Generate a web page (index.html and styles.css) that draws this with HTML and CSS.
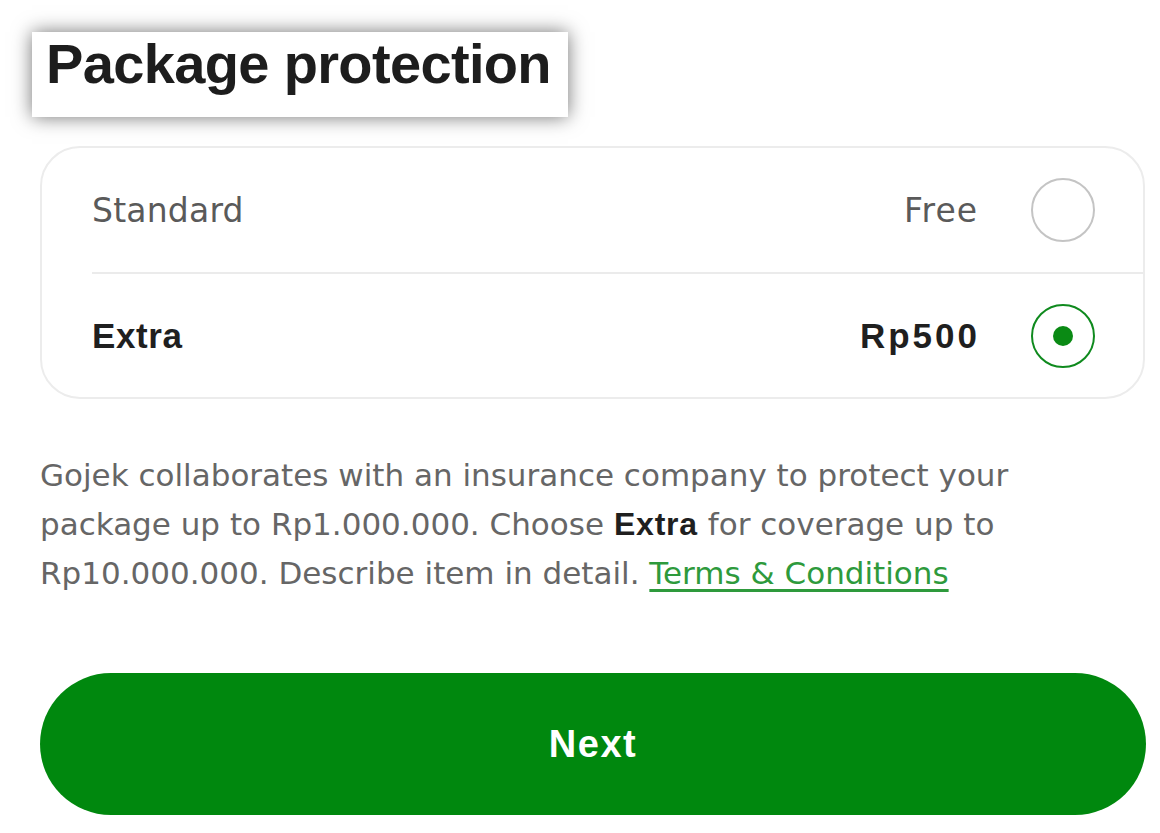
FILE: index.html
```html
<!DOCTYPE html>
<html>
<head>
<meta charset="utf-8">
<link rel="stylesheet" href="styles.css">
</head>
<body>
<div class="page">
  <div class="title-box"><h1 class="title">Package protection</h1></div>
  <div class="content">
    <div class="card">
      <div class="row row-first">
        <span class="label">Standard</span>
        <span class="price">Free</span>
        <span class="radio"></span>
      </div>
      <div class="row">
        <span class="label label-bold">Extra</span>
        <span class="price price-bold">Rp500</span>
        <span class="radio radio-on"><span class="dot"></span></span>
      </div>
    </div>
    <p class="desc">Gojek collaborates with an insurance company to protect your package up to Rp1.000.000. Choose <b class="strong">Extra</b> for coverage up to Rp10.000.000. Describe item in detail. <a class="link" href="#">Terms &amp; Conditions</a></p>
    <button class="next">Next</button>
  </div>
</div>
</body>
</html>
```

FILE: styles.css
```css
html, body {
  margin: 0;
  padding: 0;
  background: #ffffff;
}
body {
  font-family: "Liberation Sans", Arial, sans-serif;
  width: 1160px;
  height: 833px;
  overflow: hidden;
}
.page {
  padding-top: 32px;
}
.title-box {
  margin-left: 32px;
  width: 536px;
  height: 85px;
  background: #fff;
  box-shadow: 0 0 18px rgba(0, 0, 0, 0.55);
  display: flex;
  align-items: flex-start;
}
.title {
  margin: -1px 0 0 14px;
  font-size: 56px;
  line-height: normal;
  font-weight: 700;
  color: #1d1d1d;
  letter-spacing: -0.65px;
}
.content {
  margin-left: 40px;
  width: 1105px;
  margin-top: 29px;
}
.card {
  border: 2px solid #ececec;
  border-radius: 40px;
  box-sizing: border-box;
  height: 253px;
}
.row {
  display: flex;
  align-items: center;
  margin-left: 50px;
  padding-right: 48px;
  height: 124px;
}
.row-first {
  border-bottom: 2px solid #ebebeb;
}
.label {
  flex: 1;
  font-family: "DejaVu Sans", sans-serif;
  font-size: 33px;
  color: #5a5a5a;
  letter-spacing: 0.2px;
}
.price {
  font-family: "DejaVu Sans", sans-serif;
  font-size: 33px;
  color: #5a5a5a;
  margin-right: 53px;
  letter-spacing: 1px;
}
.label-bold {
  font-family: "Liberation Sans", Arial, sans-serif;
  font-size: 35px;
  font-weight: 700;
  color: #1f1f1f;
  letter-spacing: 0.6px;
}
.price-bold {
  font-family: "Liberation Sans", Arial, sans-serif;
  font-size: 35px;
  font-weight: 700;
  color: #1f1f1f;
  letter-spacing: 3px;
  margin-right: 51px;
}
.radio {
  width: 64px;
  height: 64px;
  border-radius: 50%;
  border: 2px solid #c4c4c4;
  box-sizing: border-box;
  display: flex;
  align-items: center;
  justify-content: center;
}
.radio-on {
  border-color: #0f8a1e;
}
.dot {
  width: 20px;
  height: 20px;
  border-radius: 50%;
  background: #0a8a14;
}
.desc {
  margin: 52px 0 0 0;
  font-family: "DejaVu Sans", sans-serif;
  font-size: 31px;
  line-height: 49px;
  color: #666666;
  letter-spacing: 0;
  width: 1040px;
}
.strong {
  font-family: "Liberation Sans", Arial, sans-serif;
  font-size: 32px;
  color: #1f1f1f;
  letter-spacing: 0.8px;
}
.link {
  color: #2e9a3c;
  text-decoration: underline;
  text-underline-offset: 5px;
}
.next {
  display: block;
  margin-top: 75px;
  width: 1106px;
  height: 142px;
  border: none;
  border-radius: 71px;
  background: #00880e;
  color: #ffffff;
  font-family: "Liberation Sans", Arial, sans-serif;
  font-size: 38px;
  font-weight: 700;
  letter-spacing: 1.5px;
}
```
